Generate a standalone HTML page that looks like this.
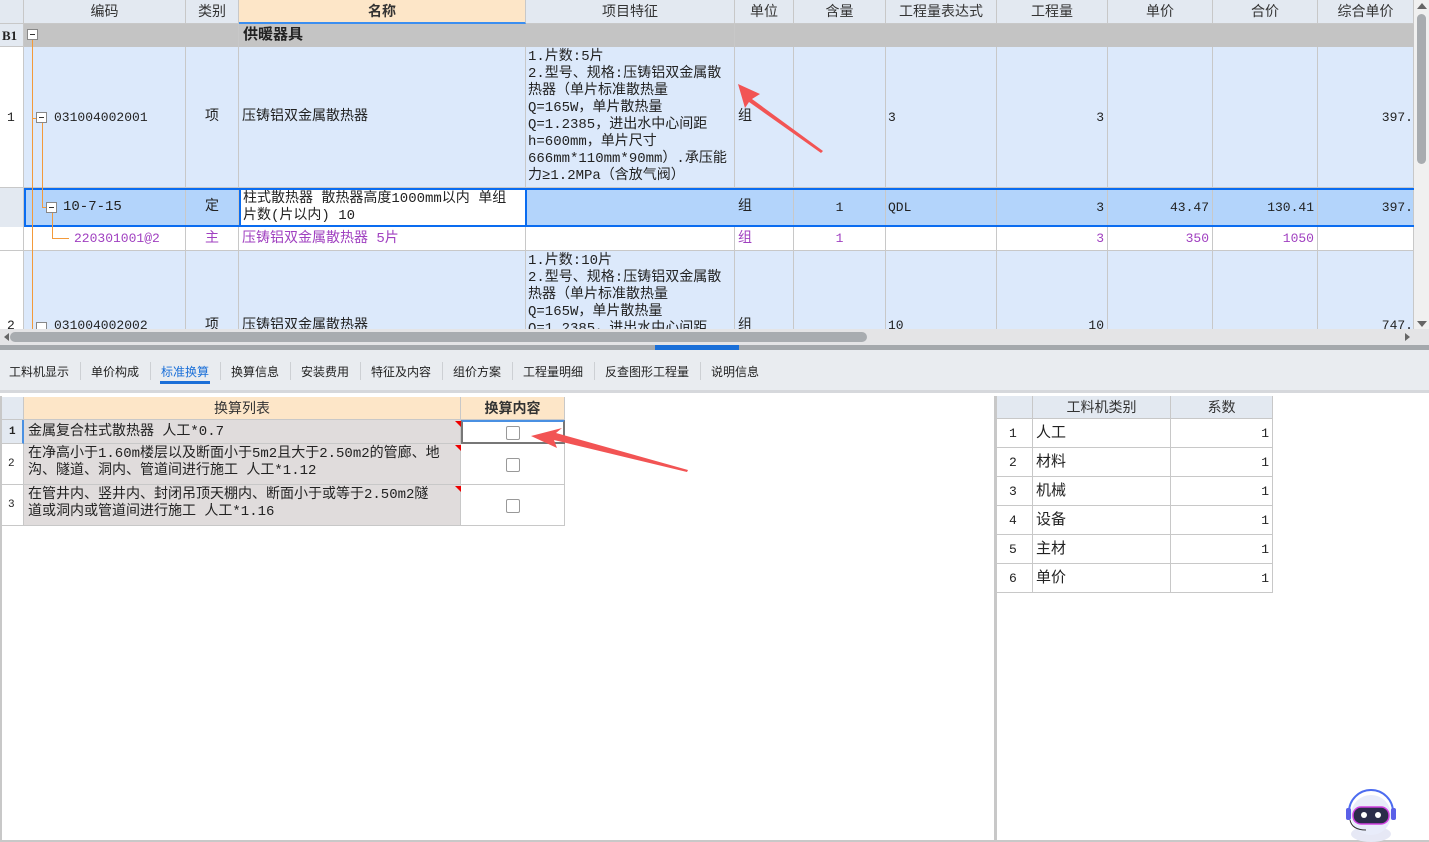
<!DOCTYPE html><html><head><meta charset="utf-8"><style>
*{margin:0;padding:0;box-sizing:border-box}
body{width:1429px;height:842px;position:relative;overflow:hidden;background:#fff;font-family:"Liberation Mono","Noto Sans CJK SC",monospace;font-size:13px;color:#222}
.a{position:absolute}
.c{position:absolute;border-right:1px solid #c8c8c8;border-bottom:1px solid #c8c8c8;overflow:hidden;white-space:nowrap;line-height:16px}
.h{background:#e3e9f1;text-align:center;line-height:23px;color:#333;font-size:14px;font-family:"Liberation Sans","Noto Sans CJK SC",sans-serif}
.r{text-align:right;padding-right:3px}
.box{position:absolute;width:11px;height:11px;border:1px solid #888;background:#fff}
.box:after{content:"";position:absolute;left:2px;top:4px;width:5px;height:1px;background:#333}
.ol{position:absolute;background:#f39a3a}
.tab{position:absolute;top:363px;font-size:12px;color:#222;font-family:"Liberation Sans","Noto Sans CJK SC",sans-serif}
.sep{position:absolute;top:362px;width:1px;height:18px;background:#cdd0d4}
.cb{position:absolute;width:14px;height:14px;border:1px solid #999;border-radius:2px;background:#fff}
.rt{position:absolute;width:0;height:0;border-top:6px solid #e00;border-left:6px solid transparent}
.ft{font-size:14px}
</style></head><body>
<div class="c h" style="left:0;top:0;width:24px;height:24px"></div>
<div class="c h" style="left:24px;top:0;width:162px;height:24px">编码</div>
<div class="c h" style="left:186px;top:0;width:53px;height:24px">类别</div>
<div class="c h" style="left:239px;top:0;width:287px;height:24px;background:#fde6c8;font-weight:bold;border-bottom:2px solid #3b8ef0">名称</div>
<div class="c h" style="left:526px;top:0;width:209px;height:24px">项目特征</div>
<div class="c h" style="left:735px;top:0;width:59px;height:24px">单位</div>
<div class="c h" style="left:794px;top:0;width:92px;height:24px">含量</div>
<div class="c h" style="left:886px;top:0;width:111px;height:24px">工程量表达式</div>
<div class="c h" style="left:997px;top:0;width:111px;height:24px">工程量</div>
<div class="c h" style="left:1108px;top:0;width:105px;height:24px">单价</div>
<div class="c h" style="left:1213px;top:0;width:105px;height:24px">合价</div>
<div class="c h" style="left:1318px;top:0;width:96px;height:24px">综合单价</div>
<div class="a" style="left:0;top:24px;width:1414px;height:23px;background:#c4c4c4"></div>
<div class="c" style="left:0;top:24px;width:24px;height:23px;background:#e3e9f1;font-weight:bold;line-height:23px;padding-left:2px;font-family:'Liberation Serif',serif">B1</div>
<div class="c" style="left:186px;top:24px;width:53px;height:23px;border-bottom:none"></div>
<div class="c" style="left:526px;top:24px;width:209px;height:23px;border-bottom:none"></div>
<div class="a" style="left:243px;top:24px;line-height:23px;font-weight:bold;font-size:15px">供暖器具</div>
<div class="a" style="left:24px;top:47px;width:1390px;height:141px;background:#dce9fb"></div>
<div class="c" style="left:0;top:47px;width:24px;height:141px;line-height:141px;padding-left:7px;background:#fff">1</div>
<div class="c" style="left:24px;top:47px;width:162px;height:141px;line-height:141px;padding-left:30px">031004002001</div>
<div class="c ft" style="left:186px;top:47px;width:53px;height:141px;line-height:141px;text-align:center">项</div>
<div class="c ft" style="left:239px;top:47px;width:287px;height:141px;line-height:141px;padding-left:3px">压铸铝双金属散热器</div>
<div class="c ft" style="left:526px;top:47px;width:209px;height:141px;padding:2px 0 0 2px;line-height:17px">1.片数:5片<br>2.型号、规格:压铸铝双金属散<br>热器（单片标准散热量<br>Q=165W，单片散热量<br>Q=1.2385，进出水中心间距<br>h=600mm，单片尺寸<br>666mm*110mm*90mm）.承压能<br>力≥1.2MPa（含放气阀）</div>
<div class="c ft" style="left:735px;top:47px;width:59px;height:141px;line-height:141px;padding-left:3px">组</div>
<div class="c" style="left:794px;top:47px;width:92px;height:141px"></div>
<div class="c" style="left:886px;top:47px;width:111px;height:141px;line-height:141px;padding-left:2px">3</div>
<div class="c r" style="left:997px;top:47px;width:111px;height:141px;line-height:141px">3</div>
<div class="c" style="left:1108px;top:47px;width:105px;height:141px"></div>
<div class="c" style="left:1213px;top:47px;width:105px;height:141px"></div>
<div class="c" style="left:1318px;top:47px;width:96px;height:141px;line-height:141px;text-align:right">397.</div>
<div class="a" style="left:0;top:188px;width:24px;height:39px;background:#e3e9f1;border-right:1px solid #c8c8c8"></div>
<div class="a" style="left:24px;top:188px;width:1390px;height:39px;background:#b3d4fb"></div>
<div class="c" style="left:24px;top:188px;width:162px;height:39px;line-height:39px;padding-left:39px;font-size:14px">10-7-15</div>
<div class="c ft" style="left:186px;top:188px;width:53px;height:39px;line-height:39px;text-align:center">定</div>
<div class="a ft" style="left:239px;top:188px;width:288px;height:39px;background:#fff;border:2px solid #0a6cf0;padding:1px 0 0 2px;line-height:17px;white-space:nowrap;overflow:hidden">柱式散热器 散热器高度1000mm以内 单组<br>片数(片以内) 10</div>
<div class="c ft" style="left:735px;top:188px;width:59px;height:39px;line-height:39px;padding-left:3px">组</div>
<div class="c" style="left:794px;top:188px;width:92px;height:39px;line-height:39px;text-align:center">1</div>
<div class="c" style="left:886px;top:188px;width:111px;height:39px;line-height:39px;padding-left:2px">QDL</div>
<div class="c r" style="left:997px;top:188px;width:111px;height:39px;line-height:39px">3</div>
<div class="c r" style="left:1108px;top:188px;width:105px;height:39px;line-height:39px">43.47</div>
<div class="c r" style="left:1213px;top:188px;width:105px;height:39px;line-height:39px">130.41</div>
<div class="c" style="left:1318px;top:188px;width:96px;height:39px;line-height:39px;text-align:right">397.</div>
<div class="a" style="left:24px;top:188px;width:1392px;height:39px;border:2px solid #0a6cf0;border-right:none"></div>
<div class="c" style="left:0;top:227px;width:24px;height:24px"></div>
<div class="c" style="left:24px;top:227px;width:162px;height:24px;line-height:24px;padding-left:50px;color:#a040c0">220301001@2</div>
<div class="c ft" style="left:186px;top:227px;width:53px;height:24px;line-height:24px;text-align:center;color:#a040c0">主</div>
<div class="c ft" style="left:239px;top:227px;width:287px;height:24px;line-height:24px;padding-left:3px;color:#a040c0">压铸铝双金属散热器 5片</div>
<div class="c" style="left:526px;top:227px;width:209px;height:24px"></div>
<div class="c ft" style="left:735px;top:227px;width:59px;height:24px;line-height:24px;padding-left:3px;color:#a040c0">组</div>
<div class="c" style="left:794px;top:227px;width:92px;height:24px;line-height:24px;text-align:center;color:#a040c0">1</div>
<div class="c" style="left:886px;top:227px;width:111px;height:24px"></div>
<div class="c r" style="left:997px;top:227px;width:111px;height:24px;line-height:24px;color:#a040c0">3</div>
<div class="c r" style="left:1108px;top:227px;width:105px;height:24px;line-height:24px;color:#a040c0">350</div>
<div class="c r" style="left:1213px;top:227px;width:105px;height:24px;line-height:24px;color:#a040c0">1050</div>
<div class="c" style="left:1318px;top:227px;width:96px;height:24px"></div>
<div class="a" style="left:24px;top:251px;width:1390px;height:78px;background:#dce9fb"></div>
<div class="c" style="left:0;top:251px;width:24px;height:80px;background:#fff;line-height:150px;padding-left:7px">2</div>
<div class="c" style="left:24px;top:251px;width:162px;height:80px;line-height:150px;padding-left:30px">031004002002</div>
<div class="c ft" style="left:186px;top:251px;width:53px;height:80px;line-height:150px;text-align:center">项</div>
<div class="c ft" style="left:239px;top:251px;width:287px;height:80px;line-height:150px;padding-left:3px">压铸铝双金属散热器</div>
<div class="c ft" style="left:526px;top:251px;width:209px;height:80px;padding:2px 0 0 2px;line-height:17px">1.片数:10片<br>2.型号、规格:压铸铝双金属散<br>热器（单片标准散热量<br>Q=165W，单片散热量<br>Q=1.2385，进出水中心间距</div>
<div class="c ft" style="left:735px;top:251px;width:59px;height:80px;line-height:150px;padding-left:3px">组</div>
<div class="c" style="left:794px;top:251px;width:92px;height:80px"></div>
<div class="c" style="left:886px;top:251px;width:111px;height:80px;line-height:150px;padding-left:2px">10</div>
<div class="c r" style="left:997px;top:251px;width:111px;height:80px;line-height:150px">10</div>
<div class="c" style="left:1108px;top:251px;width:105px;height:80px"></div>
<div class="c" style="left:1213px;top:251px;width:105px;height:80px"></div>
<div class="c" style="left:1318px;top:251px;width:96px;height:80px;line-height:150px;text-align:right">747.</div>
<div class="ol" style="left:32px;top:40px;width:1px;height:290px"></div>
<div class="ol" style="left:32px;top:118px;width:4px;height:1px"></div>
<div class="ol" style="left:42px;top:123px;width:1px;height:85px"></div>
<div class="ol" style="left:42px;top:207px;width:4px;height:1px"></div>
<div class="ol" style="left:52px;top:213px;width:1px;height:26px"></div>
<div class="ol" style="left:52px;top:238px;width:17px;height:1px"></div>
<div class="box" style="left:27px;top:29px"></div>
<div class="box" style="left:36px;top:112px"></div>
<div class="box" style="left:46px;top:202px"></div>
<div class="a" style="left:36px;top:322px;width:11px;height:8px;border:1px solid #888;border-bottom:none;background:#fff"></div>
<div class="a" style="left:1414px;top:0;width:15px;height:329px;background:#f0f0f0"></div>
<div class="a" style="left:1417px;top:14px;width:9px;height:150px;background:#a8acb0;border-radius:5px"></div>
<div class="a" style="left:1417px;top:3px;border-left:5px solid transparent;border-right:5px solid transparent;border-bottom:6px solid #666"></div>
<div class="a" style="left:1417px;top:321px;border-left:5px solid transparent;border-right:5px solid transparent;border-top:6px solid #666"></div>
<div class="a" style="left:0;top:329px;width:1429px;height:16px;background:#e4e4e6"></div>
<div class="a" style="left:10px;top:332px;width:857px;height:10px;background:#a8acb0;border-radius:5px"></div>
<div class="a" style="left:4px;top:333px;border-top:4px solid transparent;border-bottom:4px solid transparent;border-right:5px solid #666"></div>
<div class="a" style="left:1405px;top:333px;border-top:4px solid transparent;border-bottom:4px solid transparent;border-left:5px solid #666"></div>
<div class="a" style="left:0;top:345px;width:1429px;height:5px;background:#a4a8ac"></div>
<div class="a" style="left:655px;top:345px;width:84px;height:5px;background:#1a6fd8"></div>
<div class="a" style="left:0;top:350px;width:1429px;height:43px;background:#e9ecf0;border-bottom:3px solid #d6d8dc"></div>
<div class="tab" style="left:9px">工料机显示</div><div class="sep" style="left:80px"></div>
<div class="tab" style="left:91px">单价构成</div><div class="sep" style="left:150px"></div>
<div class="tab" style="left:161px;color:#1a6fd8">标准换算</div>
<div class="a" style="left:160px;top:381px;width:50px;height:3px;background:#1a6fd8"></div><div class="sep" style="left:220px"></div>
<div class="tab" style="left:231px">换算信息</div><div class="sep" style="left:290px"></div>
<div class="tab" style="left:301px">安装费用</div><div class="sep" style="left:360px"></div>
<div class="tab" style="left:371px">特征及内容</div><div class="sep" style="left:442px"></div>
<div class="tab" style="left:453px">组价方案</div><div class="sep" style="left:512px"></div>
<div class="tab" style="left:523px">工程量明细</div><div class="sep" style="left:594px"></div>
<div class="tab" style="left:605px">反查图形工程量</div><div class="sep" style="left:700px"></div>
<div class="tab" style="left:711px">说明信息</div>
<div class="a" style="left:0;top:396px;width:2px;height:446px;background:#c8c8c8"></div>
<div class="c h" style="left:2px;top:397px;width:22px;height:23px"></div>
<div class="c h" style="left:24px;top:397px;width:437px;height:23px;background:#fde6c8">换算列表</div>
<div class="c h" style="left:461px;top:397px;width:104px;height:23px;background:#fde6c8;font-weight:bold">换算内容</div>
<div class="c" style="left:2px;top:420px;width:22px;height:24px;background:#e3e9f1;font-weight:bold;font-size:11px;line-height:24px;padding-left:7px;border-right:2px solid #4a90e2">1</div>
<div class="c ft" style="left:24px;top:420px;width:437px;height:24px;background:#e0dcdc;line-height:24px;padding-left:4px">金属复合柱式散热器 人工*0.7</div>
<div class="a" style="left:461px;top:420px;width:104px;height:24px;border:2px solid #777;border-top:2px solid #4a90e2"></div>
<div class="c" style="left:2px;top:444px;width:22px;height:41px;font-size:11px;line-height:41px;padding-left:6px">2</div>
<div class="c ft" style="left:24px;top:444px;width:437px;height:41px;background:#e0dcdc;padding:2px 0 0 4px;line-height:17px">在净高小于1.60m楼层以及断面小于5m2且大于2.50m2的管廊、地<br>沟、隧道、洞内、管道间进行施工 人工*1.12</div>
<div class="c" style="left:461px;top:444px;width:104px;height:41px"></div>
<div class="c" style="left:2px;top:485px;width:22px;height:41px;font-size:11px;line-height:41px;padding-left:6px">3</div>
<div class="c ft" style="left:24px;top:485px;width:437px;height:41px;background:#e0dcdc;padding:2px 0 0 4px;line-height:17px">在管井内、竖井内、封闭吊顶天棚内、断面小于或等于2.50m2隧<br>道或洞内或管道间进行施工 人工*1.16</div>
<div class="c" style="left:461px;top:485px;width:104px;height:41px"></div>
<div class="rt" style="left:455px;top:421px"></div><div class="rt" style="left:455px;top:445px"></div><div class="rt" style="left:455px;top:486px"></div>
<div class="cb" style="left:506px;top:426px"></div>
<div class="cb" style="left:506px;top:458px"></div>
<div class="cb" style="left:506px;top:499px"></div>
<div class="a" style="left:994px;top:396px;width:3px;height:446px;background:#c8c8c8"></div>
<div class="a" style="left:0;top:840px;width:1429px;height:2px;background:#c8c8c8"></div>
<div class="c h" style="left:997px;top:396px;width:36px;height:23px"></div>
<div class="c h" style="left:1033px;top:396px;width:138px;height:23px">工料机类别</div>
<div class="c h" style="left:1171px;top:396px;width:102px;height:23px">系数</div>
<div class="c" style="left:997px;top:419px;width:36px;height:29px;line-height:29px;padding-left:12px">1</div><div class="c" style="left:1033px;top:419px;width:138px;height:29px;line-height:29px;padding-left:3px;font-size:15px">人工</div><div class="c r" style="left:1171px;top:419px;width:102px;height:29px;line-height:29px">1</div>
<div class="c" style="left:997px;top:448px;width:36px;height:29px;line-height:29px;padding-left:12px">2</div><div class="c" style="left:1033px;top:448px;width:138px;height:29px;line-height:29px;padding-left:3px;font-size:15px">材料</div><div class="c r" style="left:1171px;top:448px;width:102px;height:29px;line-height:29px">1</div>
<div class="c" style="left:997px;top:477px;width:36px;height:29px;line-height:29px;padding-left:12px">3</div><div class="c" style="left:1033px;top:477px;width:138px;height:29px;line-height:29px;padding-left:3px;font-size:15px">机械</div><div class="c r" style="left:1171px;top:477px;width:102px;height:29px;line-height:29px">1</div>
<div class="c" style="left:997px;top:506px;width:36px;height:29px;line-height:29px;padding-left:12px">4</div><div class="c" style="left:1033px;top:506px;width:138px;height:29px;line-height:29px;padding-left:3px;font-size:15px">设备</div><div class="c r" style="left:1171px;top:506px;width:102px;height:29px;line-height:29px">1</div>
<div class="c" style="left:997px;top:535px;width:36px;height:29px;line-height:29px;padding-left:12px">5</div><div class="c" style="left:1033px;top:535px;width:138px;height:29px;line-height:29px;padding-left:3px;font-size:15px">主材</div><div class="c r" style="left:1171px;top:535px;width:102px;height:29px;line-height:29px">1</div>
<div class="c" style="left:997px;top:564px;width:36px;height:29px;line-height:29px;padding-left:12px">6</div><div class="c" style="left:1033px;top:564px;width:138px;height:29px;line-height:29px;padding-left:3px;font-size:15px">单价</div><div class="c r" style="left:1171px;top:564px;width:102px;height:29px;line-height:29px">1</div>
<svg class="a" style="left:0;top:0" width="1429" height="842">
<polygon points="738,84 760,94 752,99 823,151 821,153 749,102 745,108" fill="#f25454"/>
<polygon points="531,436 562,428 556,433 688,470 687,472 554,440 557,448" fill="#f25454"/>
<ellipse cx="1371" cy="834" rx="20" ry="8" fill="#e6e8f5"/>
<path d="M1349,812 a22,22 0 0 1 44,0" fill="none" stroke="#4c6cf0" stroke-width="2"/>
<circle cx="1371" cy="815" r="20" fill="#e8ecfa"/>
<rect x="1353" y="807" width="36" height="17" rx="8" fill="#2a2c4a" stroke="#d040e0" stroke-width="1.5"/>
<circle cx="1364" cy="815" r="3" fill="#fff"/><circle cx="1378" cy="815" r="3" fill="#fff"/>
<rect x="1346" y="808" width="5" height="12" rx="2" fill="#5a60e8"/><rect x="1391" y="808" width="5" height="12" rx="2" fill="#5a60e8"/>
<path d="M1350,820 q2,10 16,10" fill="none" stroke="#333" stroke-width="1"/>
</svg>
</body></html>
